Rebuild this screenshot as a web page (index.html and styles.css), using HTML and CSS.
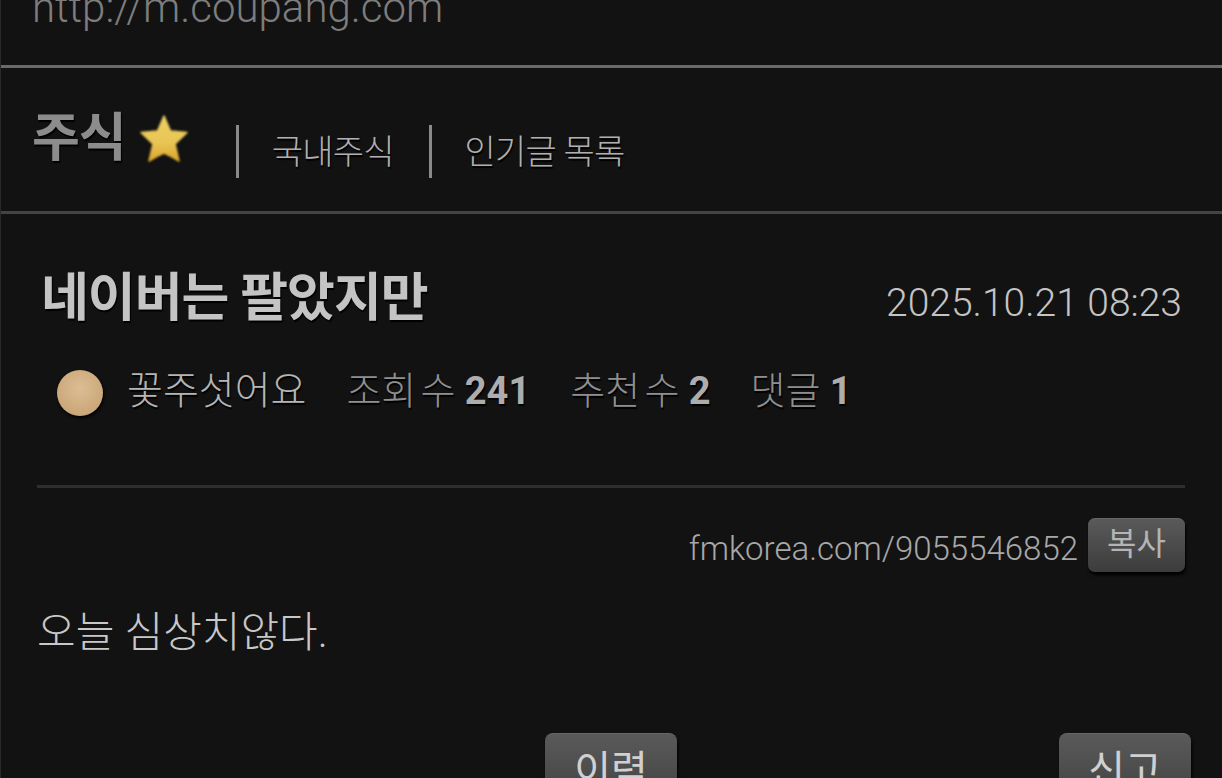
FILE: index.html
```html
<!DOCTYPE html>
<html lang="ko">
<head>
  <meta charset="UTF-8" />
  <title>네이버는 팔았지만 - 주식</title>
  <meta name="viewport" content="width=device-width, initial-scale=1" />
  <link rel="stylesheet" href="styles.css">
</head>
<body>

  <div class="ad-link">http://m.coupang.com</div>

  <nav class="board-nav">
    <h2 class="board-title">주식</h2>
    <svg class="board-star" viewBox="0 0 50 50" width="50" height="50" aria-hidden="true">
      <defs>
        <linearGradient id="starFill" x1="0" y1="0" x2="0" y2="1">
          <stop offset="0" stop-color="#f0d060" />
          <stop offset="0.6" stop-color="#e8c555" />
          <stop offset="1" stop-color="#dca52e" />
        </linearGradient>
      </defs>
      <path d="M25 2 L31.5 17 L48 18.5 L36 30 L40 47 Q32 42 25 39 Q18 42 10 47 L14 30 L2 18.5 L18.500 17 Z" fill="url(#starFill)" stroke="url(#starFill)" stroke-width="1.500" stroke-linejoin="round" />
    </svg>
    <ul class="board-links">
      <li><a href="#">국내주식</a></li>
      <li><a href="#">인기글 목록</a></li>
    </ul>
  </nav>

  <main class="post">
    <div class="post-head">
      <h1 class="post-title">네이버는 팔았지만</h1>
      <span class="post-date">2025.10.21 08:23</span>
    </div>

    <div class="post-meta">
      <span class="avatar"></span>
      <span class="author">꽃주섯어요</span>
      <span class="stat">조회 수 <b>241</b></span>
      <span class="stat">추천 수 <b>2</b></span>
      <span class="stat">댓글 <b>1</b></span>
    </div>

    <div class="post-url">
      <span>fmkorea.com/9055546852</span>
      <button class="btn btn-copy">복사</button>
    </div>

    <p class="post-body">오늘 심상치않다.</p>

    <div class="post-actions">
      <button class="btn btn-big">이력</button>
      <button class="btn btn-big">신고</button>
    </div>
  </main>

</body>
</html>
```

FILE: styles.css
```css
html, body {
  height: 778px;
  overflow: hidden;
}

body {
  font-family: Roboto, 'Noto Sans CJK KR', sans-serif;
  background-color: #121212;
  margin: 0;
  color: #bbb;
  border-left: 1px solid #2a2a2a;
}

.ad-link {
  height: 80px;
  margin-top: -15px;
  padding-left: 31px;
  font-size: 42px;
  font-weight: 300;
  line-height: 45px;
  color: #7d7d7d;
  border-bottom: 3px solid #6a6a6a;
  overflow: hidden;
}

.board-nav {
  display: flex;
  align-items: flex-start;
  height: 143px;
  padding-left: 31px;
  border-bottom: 3px solid #444;
}

.board-title {
  margin: 41px 0 0;
  font-size: 52px;
  line-height: 60px;
  font-weight: 700;
  letter-spacing: -1px;
  color: #8c8c8c;
  text-shadow: 1px 2px 1px #000;
}

.board-star {
  width: 52px;
  height: 50px;
  margin: 46px 0 0 12px;
  filter: blur(1px);
}

.board-links {
  display: flex;
  margin: 57px 0 0 46px;
  padding: 0;
  list-style: none;
}

.board-links li {
  height: 53px;
  padding: 0 35px 0 33px;
  border-left: 3px solid #8a8a8a;
}

.board-links a {
  display: block;
  margin-top: 4px;
  font-size: 34px;
  line-height: 46px;
  font-weight: 300;
  letter-spacing: -0.8px;
  color: #b0b0b0;
  text-decoration: none;
  text-shadow: 1px 2px 1px #000;
}

.post {
  padding: 0 37px 0 36px;
}

.post-head {
  display: flex;
  justify-content: space-between;
  align-items: center;
  padding: 50px 3px 0 4px;
}

.post-title {
  margin: 0;
  font-size: 52px;
  line-height: 70px;
  font-weight: 700;
  letter-spacing: -1px;
  color: #c4c4c4;
  text-shadow: 1px 2px 1px #000;
}

.post-date {
  margin-top: 8px;
  font-size: 39px;
  font-weight: 300;
  color: #c4c4c4;
}

.post-meta {
  display: flex;
  align-items: center;
  height: 70px;
  margin: 18px 0 30px;
  padding: 0 0 63px 20px;
  font-size: 39px;
  font-weight: 300;
  color: #8f8f8f;
  text-shadow: 1px 2px 1px #000;
  border-bottom: 3px solid #2e2e2e;
}

.avatar {
  width: 46px;
  height: 46px;
  margin: 12px 24px 0 0;
  border-radius: 50%;
  background: radial-gradient(circle at 50% 40%, #dcbd93, #c9a678 75%, #a88a60);
  box-shadow: 1px 2px 3px #000;
}

.author {
  margin-right: 40px;
  color: #b5b5b5;
}

.stat {
  margin-right: 40px;
  font-size: 38px;
  word-spacing: -5px;
}

.stat b {
  margin-left: 5px;
  font-weight: 700;
  color: #adadad;
}

.post-url {
  display: flex;
  justify-content: flex-end;
  align-items: center;
  gap: 10px;
  font-size: 33px;
  font-weight: 300;
  color: #a8a8a8;
}

.post-url span {
  padding-top: 6px;
}

.btn {
  font-family: inherit;
  font-weight: 400;
  color: #b4b4b4;
  border: none;
  border-top: 1px solid #666;
  background: linear-gradient(#5a5a5a, #3c3c3c);
  box-shadow: 1px 3px 3px #000;
  padding: 0;
}

.btn-copy {
  width: 97px;
  height: 54px;
  border-radius: 7px;
  font-size: 32px;
  line-height: 46px;
  padding-bottom: 4px;
}

.post-body {
  margin: 32px 0 0 0;
  font-size: 42px;
  line-height: 58px;
  font-weight: 300;
  color: #c8c8c8;
}

.post-actions {
  display: flex;
  margin: 71px -6px 0 508px;
  justify-content: space-between;
}

.btn-big {
  width: 132px;
  height: 84px;
  border-radius: 8px;
  font-size: 40px;
  line-height: 60px;
  color: #d0d0d0;
  padding-bottom: 10px;
}
```
